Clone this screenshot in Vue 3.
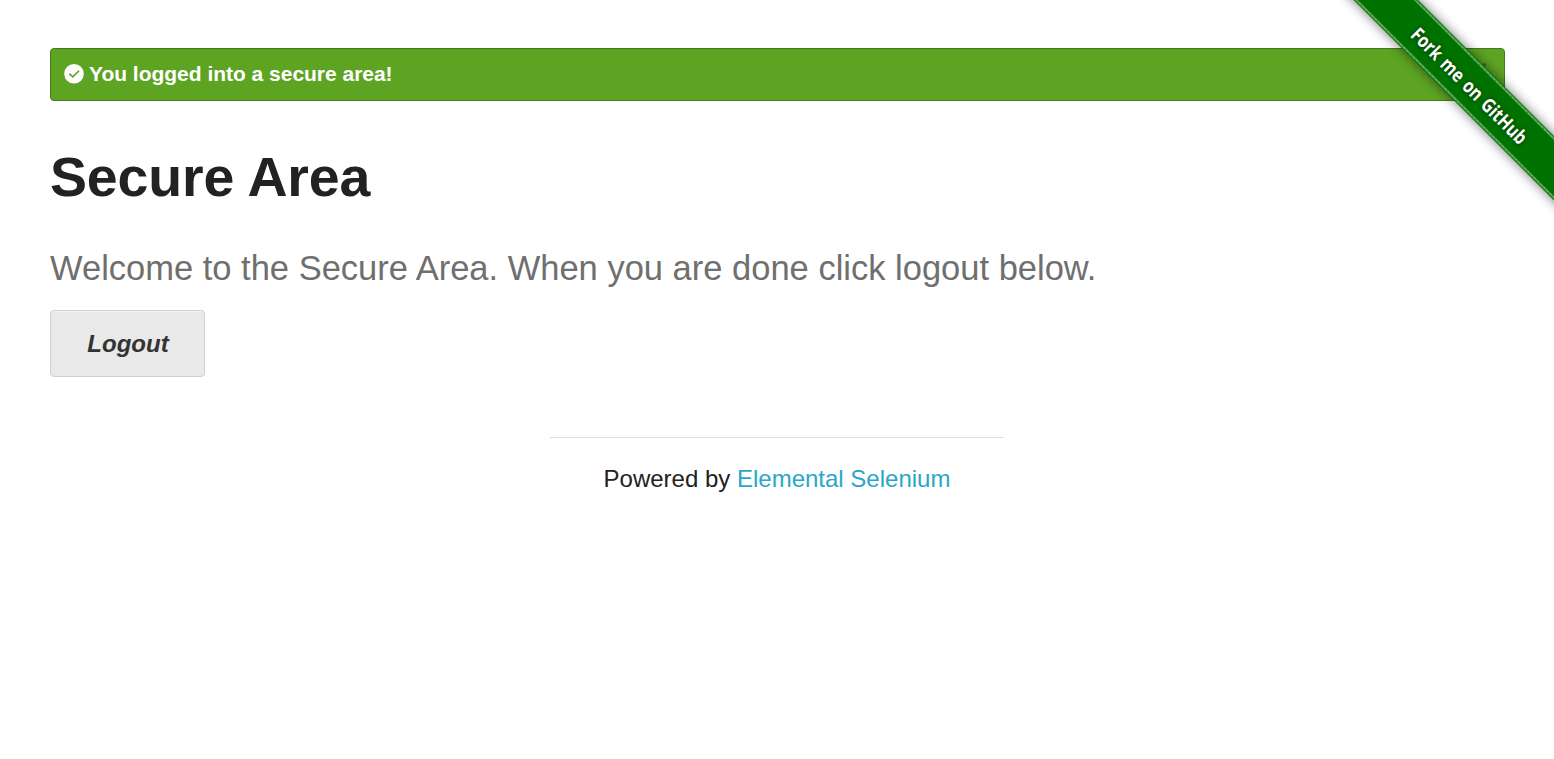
<script setup>
const message = 'You logged into a secure area!'
</script>

<template>
  <div class="page">
    <a class="ribbon" href="#" aria-label="Fork me on GitHub">
      <svg width="224" height="224" viewBox="0 0 224 224">
        <defs>
          <filter id="band-shadow" x="-20%" y="-60%" width="140%" height="220%">
            <feGaussianBlur stdDeviation="6" />
          </filter>
          <filter id="text-shadow" x="-20%" y="-60%" width="140%" height="220%">
            <feGaussianBlur stdDeviation="2" />
          </filter>
        </defs>
        <g transform="translate(139.5 83.7) rotate(45)">
          <rect x="-190" y="-23" width="380" height="46" fill="#000" opacity="0.5" filter="url(#band-shadow)" />
          <rect x="-190" y="-22.8" width="380" height="45.6" fill="#007200" />
          <path d="M-190 -20.8H190M-190 20.8H190" stroke="#3f953f" stroke-width="2.4" />
          <path d="M-190 -20.8H190M-190 20.8H190" stroke="#6fb06f" stroke-width="1.2" stroke-dasharray="3 1.5" />
          <text class="ribbon-text ribbon-glow" x="-76" y="9" textLength="155" lengthAdjust="spacingAndGlyphs" filter="url(#text-shadow)" aria-hidden="true">Fork me on GitHub</text>
          <text class="ribbon-text" x="-76" y="8.7" textLength="155" lengthAdjust="spacingAndGlyphs">Fork me on GitHub</text>
        </g>
      </svg>
    </a>

    <div class="alert">
      <svg class="check" width="20" height="20" viewBox="0 0 20 20">
        <circle cx="10" cy="9.8" r="9.8" fill="#fff" />
        <path d="M5.3 9.6L8.8 12.9L15 6.8" fill="none" stroke="#5da423" stroke-width="1.6" />
      </svg>
      <span>{{ message }}</span>
      <a class="close" href="#">×</a>
    </div>

    <main>
      <h2>Secure Area</h2>
      <h4>Welcome to the Secure Area. When you are done click logout below.</h4>
      <a class="button" href="#">Logout</a>
    </main>

    <footer>
      <hr />
      <div>Powered by <a href="#">Elemental Selenium</a></div>
    </footer>
  </div>
</template>

<style>
body {
  background: #fff;
}
</style>

<style scoped>
.page {
  position: relative;
  box-sizing: border-box;
  height: 759px;
  padding: 48px 49px 0 50px;
  overflow: hidden;
  font-family: "Liberation Sans", Arial, sans-serif;
  color: #222;
}
.ribbon {
  position: absolute;
  top: 0;
  right: 0;
  z-index: 2;
  width: 224px;
  height: 224px;
}
.ribbon svg {
  display: block;
}
.ribbon-text {
  font-family: "Open Sans", "Noto Sans", sans-serif;
  font-size: 19.5px;
  font-weight: 700;
  word-spacing: 2px;
  fill: #fff;
}
.ribbon-glow {
  fill: #000;
  opacity: 0.6;
}
.alert {
  display: flex;
  align-items: center;
  box-sizing: border-box;
  height: 53px;
  padding: 0 16px 2px 13px;
  border: 1px solid #457a1a;
  border-radius: 4px;
  background: #5da423;
  color: #fff;
  font-size: 21px;
  font-weight: 700;
  letter-spacing: -0.02px;
}
.check {
  flex: none;
  margin-right: 5px;
}
.close {
  margin-left: auto;
  padding-bottom: 7px;
  color: #333;
  font-size: 33px;
  font-weight: 700;
  line-height: 1;
  text-decoration: none;
  opacity: 0.5;
}
h2 {
  margin: 37px 0 0;
  font-size: 55.5px;
  font-weight: 700;
  letter-spacing: -0.15px;
  line-height: 78px;
}
h4 {
  margin: 28px 0 0;
  color: #6f6f6f;
  font-size: 34.5px;
  font-weight: 400;
  line-height: 48px;
  white-space: nowrap;
}
.button {
  display: flex;
  align-items: center;
  justify-content: center;
  box-sizing: border-box;
  width: 155px;
  height: 67px;
  margin-top: 18px;
  padding-left: 1px;
  border: 1px solid #d0d0d0;
  border-radius: 4px;
  background: #e9e9e9;
  box-shadow: inset 0 1px 0 rgba(255, 255, 255, 0.5);
  color: #333;
  font-size: 24px;
  font-style: italic;
  font-weight: 700;
  text-decoration: none;
}
footer {
  width: 454px;
  margin: 60px 0 0 500px;
  text-align: center;
  font-size: 24px;
  line-height: 38px;
}
hr {
  height: 1px;
  margin: 0 0 22px;
  border: 0;
  background: #ddd;
}
footer a {
  color: #2ba6cb;
  text-decoration: none;
}
</style>
